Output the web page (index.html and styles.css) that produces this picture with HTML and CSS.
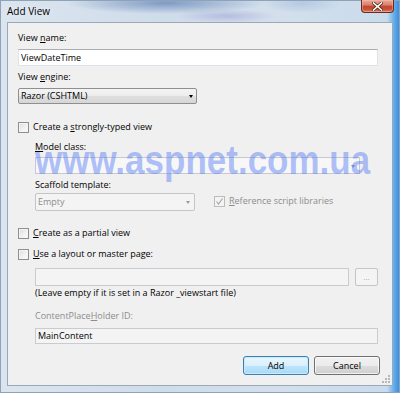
FILE: index.html
```html
<!DOCTYPE html>
<html>
<head>
<meta charset="utf-8">
<title>Add View</title>
<link rel="stylesheet" href="styles.css">
</head>
<body>
<div class="window">
  <div class="titlebar">
    <span class="title">Add View</span>
    <div class="close">
      <svg width="11" height="9" viewBox="0 0 11 9">
        <path d="M1.5 1 L9.5 8 M9.5 1 L1.5 8" stroke="#4a2a22" stroke-width="3" stroke-linecap="square"/>
        <path d="M1.5 1 L9.5 8 M9.5 1 L1.5 8" stroke="#ffffff" stroke-width="1.6" stroke-linecap="square"/>
      </svg>
    </div>
  </div>
  <div class="client">
    <div class="lbl first">View <u>n</u>ame:</div>
    <div class="textbox w-name"><span>ViewDateTime</span></div>
    <div class="lbl gap5">View <u>e</u>ngine:</div>
    <div class="dropdown w-engine"><span>Razor (CSHTML)</span><i class="arrow"></i></div>

    <div class="check-row row-typed"><span class="cb"></span><span>Create a <u>s</u>trongly-typed view</span></div>
    <div class="indent">
      <div class="lbl gap8"><u>M</u>odel class:</div>
      <div class="combo w-model"><i class="arrow gray"></i></div>
      <div class="lbl gap5">Scaffold template:</div>
      <div class="scaffold-row">
        <div class="dropdown disabled w-scaffold"><span>Empty</span><i class="arrow gray"></i></div>
        <div class="check-row disabled"><span class="cb checked">
          <svg width="9" height="9" viewBox="0 0 9 9"><path d="M1.5 4.5 L3.5 7 L7.5 1.5" fill="none" stroke="#a3a3a3" stroke-width="1.1"/></svg>
        </span><span><u>R</u>eference script libraries</span></div>
      </div>
    </div>

    <div class="check-row row-partial"><span class="cb"></span><span><u>C</u>reate as a partial view</span></div>
    <div class="check-row row-layout"><span class="cb"></span><span><u>U</u>se a layout or master page:</span></div>
    <div class="indent">
      <div class="layout-row">
        <div class="textbox disabled w-layout"></div>
        <div class="browse">...</div>
      </div>
      <div class="lbl hint">(Leave empty if it is set in a Razor _viewstart file)</div>
      <div class="lbl gray cph">ContentPlace<u>H</u>older ID:</div>
      <div class="textbox disabled w-main"><span>MainContent</span></div>
    </div>

    <div class="buttons">
      <div class="btn default">Add</div>
      <div class="btn">Cancel</div>
    </div>
    <svg class="grip" width="9" height="9" viewBox="0 0 9 9">
      <g fill="#b8b8b8">
        <rect x="6" y="0" width="2" height="2"/>
        <rect x="3" y="3" width="2" height="2"/><rect x="6" y="3" width="2" height="2"/>
        <rect x="0" y="6" width="2" height="2"/><rect x="3" y="6" width="2" height="2"/><rect x="6" y="6" width="2" height="2"/>
      </g>
    </svg>
  </div>
  <div class="watermark">www.aspnet.com.ua</div>
</div>
</body>
</html>
```

FILE: styles.css
```css
html, body {
  margin: 0;
  padding: 0;
  width: 400px;
  height: 393px;
  overflow: hidden;
  background: #dfe7ef;
}

.window {
  position: relative;
  width: 400px;
  height: 393px;
  box-sizing: border-box;
  padding: 0 6px 6px 6px;
  display: flex;
  flex-direction: column;
  font-family: "Open Sans", "Noto Sans", sans-serif;
  font-size: 9px;
  color: #000;
  background:
    radial-gradient(ellipse 100px 11px at 165px 2px, rgba(60, 100, 165, 0.55), rgba(60, 100, 165, 0) 100%),
    radial-gradient(ellipse 50px 7px at 225px 15px, rgba(120, 110, 200, 0.3), rgba(120, 110, 200, 0) 100%),
    radial-gradient(ellipse 40px 10px at 300px 2px, rgba(110, 150, 200, 0.3), rgba(110, 150, 200, 0) 100%),
    linear-gradient(to right, #dbe5ef 0%, #cfdcea 40%, #d3dfec 70%, #c9dbec 97%, #5aa6e8 99%, #3b90e0 100%);
  border: 1px solid #8ea2b8;
}

.titlebar {
  height: 21px;
  flex: none;
  display: flex;
  justify-content: space-between;
  align-items: flex-start;
}

.title {
  font-size: 10px;
  line-height: 12px;
  padding-top: 4px;
  color: #000;
  text-shadow: 0 0 6px rgba(255,255,255,0.9);
}

.close {
  width: 33px;
  height: 13px;
  margin-top: -1px;
  margin-right: -1px;
  box-sizing: border-box;
  border: 1px solid #6b2a1e;
  border-top: none;
  border-radius: 0 0 4px 4px;
  background: linear-gradient(to bottom, #e9a99a 0%, #d9826c 40%, #c4452c 55%, #c8543a 80%, #dd8a6e 100%);
  display: flex;
  align-items: center;
  justify-content: center;
  box-shadow: inset 0 0 0 1px rgba(255,200,180,0.4);
}

.client {
  position: relative;
  flex: 1;
  background: #f0f0f0;
  border: 1px solid #9aa8b7;
  padding: 9px 12px 0 10px;
  display: flex;
  flex-direction: column;
  align-items: flex-start;
}

.lbl {
  line-height: 12px;
  white-space: nowrap;
}
.gap5 { margin-top: 5px; }
.gap8 { margin-top: 8px; }

u { text-decoration: underline; text-underline-offset: 1px; }

.gray { color: #8d8d8d; }

.textbox {
  box-sizing: border-box;
  height: 17px;
  margin-top: 5px;
  background: #fff;
  border: 1px solid #dde3ea;
  border-top-color: #abadb3;
  display: flex;
  align-items: center;
  padding-left: 2px;
  line-height: 12px;
}
.textbox.disabled {
  background: #f4f4f4;
  border: 1px solid #c9cbce;
}
.w-name { width: 360px; }

.dropdown {
  position: relative;
  box-sizing: border-box;
  height: 16px;
  margin-top: 5px;
  border: 1px solid #8e8f8f;
  border-radius: 2px;
  background: linear-gradient(to bottom, #f4f4f4 0%, #ececec 50%, #dfdfdf 51%, #d6d6d6 100%);
  display: flex;
  align-items: center;
  padding-left: 2px;
  line-height: 12px;
}
.w-engine { width: 179px; }

.dropdown.disabled {
  background: #f4f4f4;
  border-color: #c2c5c9;
  color: #8d8d8d;
  height: 18px;
  margin-top: 2px;
}
.w-scaffold { width: 160px; }

.arrow {
  position: absolute;
  right: 3px;
  top: 50%;
  margin-top: -1px;
  width: 0;
  height: 0;
  border-left: 2.5px solid transparent;
  border-right: 2.5px solid transparent;
  border-top: 3px solid #000;
}
.arrow.gray { border-top-color: #9a9a9a; right: 4px; }

.combo {
  position: relative;
  box-sizing: border-box;
  height: 17px;
  margin-top: 4px;
  background: #f7f7f7;
  border: 1px solid #c6c9cd;
}
.w-model { width: 325px; }

.check-row {
  display: flex;
  align-items: center;
  height: 12px;
  line-height: 12px;
  white-space: nowrap;
}
.check-row .cb {
  box-sizing: border-box;
  width: 11px;
  height: 11px;
  margin-right: 4px;
  border: 1px solid #8f8f8f;
  background: linear-gradient(135deg, #dcdcdc 0%, #f3f3f3 60%, #fcfcfc 100%);
  box-shadow: inset 0 0 0 1px #f4f4f4;
  display: flex;
  align-items: center;
  justify-content: center;
  flex: none;
}
.check-row.disabled { color: #8d8d8d; margin-left: 19px; }
.check-row.disabled .cb {
  border-color: #bcbcbc;
  background: #f4f4f4;
  box-shadow: none;
}
.row-typed { margin-top: 17px; }
.row-partial { margin-top: 16px; }
.row-layout { margin-top: 9px; }

.indent {
  margin-left: 17px;
  display: flex;
  flex-direction: column;
  align-items: flex-start;
}

.scaffold-row {
  display: flex;
  align-items: center;
}

.layout-row {
  display: flex;
  align-items: center;
  margin-top: 8px;
  gap: 6px;
}
.layout-row .textbox { margin-top: 0; height: 18px; }
.w-layout { width: 314px; }
.browse {
  box-sizing: border-box;
  width: 23px;
  height: 18px;
  border: 1px solid #c2c5c9;
  border-radius: 2px;
  background: #f4f4f4;
  color: #a8a8a8;
  font-size: 8px;
  display: flex;
  align-items: center;
  justify-content: center;
  line-height: 8px;
}

.hint { margin-top: 1px; }
.cph { margin-top: 11px; }
.w-main { width: 343px; height: 16px; margin-top: 6px; }

.buttons {
  align-self: flex-end;
  display: flex;
  gap: 5px;
  margin-top: 12px;
}
.btn {
  box-sizing: border-box;
  width: 66px;
  height: 19px;
  border: 1px solid #707070;
  border-radius: 3px;
  background: linear-gradient(to bottom, #f2f2f2 0%, #ebebeb 50%, #dddddd 51%, #cfcfcf 100%);
  box-shadow: inset 0 0 0 1px rgba(255,255,255,0.7);
  display: flex;
  align-items: center;
  justify-content: center;
  line-height: 12px;
}
.btn.default {
  border-color: #3c7fb1;
  background: linear-gradient(to bottom, #eaf6fd 0%, #d9f0fc 50%, #bee6fd 51%, #a7d9f5 100%);
  box-shadow: inset 0 0 0 1px #c8eafc;
}

.grip {
  position: absolute;
  right: 1px;
  bottom: 1px;
}

.watermark {
  position: absolute;
  left: 34px;
  top: 139px;
  font-family: "Liberation Sans", Arial, sans-serif;
  font-weight: bold;
  font-size: 35px;
  line-height: 44px;
  color: rgba(80, 120, 245, 0.45);
  white-space: nowrap;
  pointer-events: none;
  transform: scaleY(1.18);
  transform-origin: 0 34px;
}
```
